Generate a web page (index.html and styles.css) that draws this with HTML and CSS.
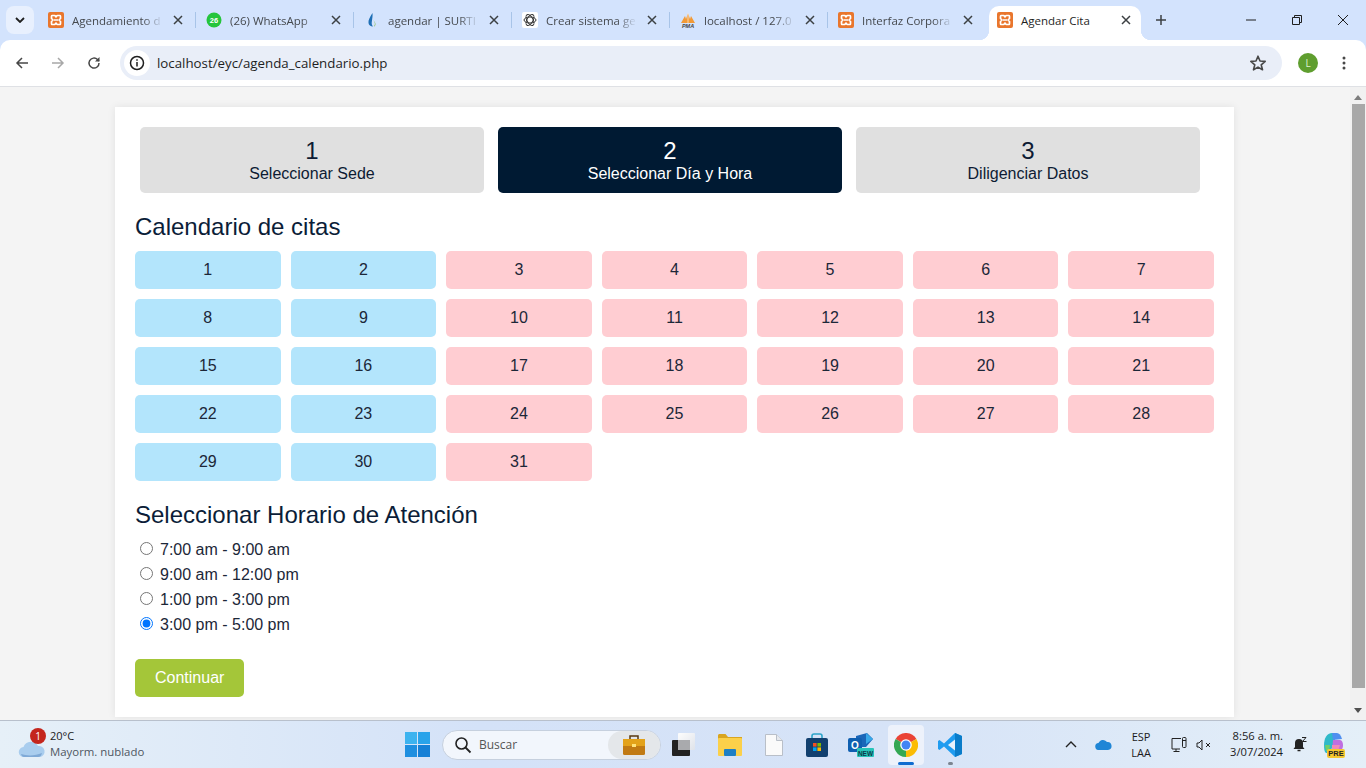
FILE: index.html
```html
<!DOCTYPE html>
<html lang="es">
<head>
    <meta charset="UTF-8">
    <title>Agendar Cita</title>
    <link rel="stylesheet" href="styles.css">
</head>
<body>
    <svg class="defs" width="0" height="0">
        <symbol id="xampp" viewBox="0 0 16 16">
            <rect width="16" height="16" rx="2" fill="#e9762d"/>
            <path d="M4 3.500h2.500c1 0 1 1.500 1.500 1.500s.5-1.500 1.500-1.500H12c.5 0 .5.5.5 1v2L11 8l1.500 1.500v2c0 .5 0 1-.5 1H9.500c-1 0-1-1.500-1.500-1.500s-.5 1.500-1.500 1.500H4c-.5 0-.5-.5-.5-1v-2L5 8 3.500 6.500v-2c0-.5 0-1 .5-1z" fill="none" stroke="#fff" stroke-width="1.700" stroke-linejoin="round"/>
            <path d="M6 8h4" stroke="#fff" stroke-width="1.500"/>
        </symbol>
        <symbol id="close" viewBox="0 0 10 10">
            <path d="M1 1l8 8M9 1l-8 8" stroke="#3c4043" stroke-width="1.500" fill="none"/>
        </symbol>
    </svg>

    <!-- barra de pestañas -->
    <div class="tabstrip">
        <div class="tab-menu">
            <svg width="10" height="6" viewBox="0 0 10 6"><path d="M1 1l4 4 4-4" stroke="#1f1f1f" stroke-width="1.800" fill="none"/></svg>
        </div>
        <div class="tab">
            <svg class="favicon" viewBox="0 0 16 16"><use href="#xampp"/></svg>
            <span class="tab-title">Agendamiento d</span>
            <svg class="tab-close" viewBox="0 0 10 10"><use href="#close"/></svg>
        </div>
        <div class="tab">
            <svg class="favicon" viewBox="0 0 16 16">
                <circle cx="8" cy="8" r="7.500" fill="#25c53c"/>
                <text x="8" y="10.500" text-anchor="middle" class="wa-count">26</text>
            </svg>
            <span class="tab-title">(26) WhatsApp</span>
            <svg class="tab-close" viewBox="0 0 10 10"><use href="#close"/></svg>
        </div>
        <div class="tab">
            <svg class="favicon" viewBox="0 0 16 16">
                <path d="M8.500 1C6 5 4 8 4.500 11c.3 2 2 3.500 4.500 3.500-1.500-1.500-1.500-3.500-1-6 .3-2 .8-5 .5-7.500z" fill="#1f6fb5"/>
                <path d="M8.800 8c2 1.500 3 4 1.200 6.500 2.200-.5 2-4.500-1.200-6.500z" fill="#7fb93c"/>
            </svg>
            <span class="tab-title">agendar | SURTI</span>
            <svg class="tab-close" viewBox="0 0 10 10"><use href="#close"/></svg>
        </div>
        <div class="tab">
            <svg class="favicon" viewBox="0 0 16 16">
                <rect width="16" height="16" rx="2" fill="#fff"/>
                <g fill="none" stroke="#333" stroke-width="1">
                    <ellipse cx="8" cy="8" rx="6" ry="3"/>
                    <ellipse cx="8" cy="8" rx="6" ry="3" transform="rotate(60 8 8)"/>
                    <ellipse cx="8" cy="8" rx="6" ry="3" transform="rotate(120 8 8)"/>
                </g>
            </svg>
            <span class="tab-title">Crear sistema ge</span>
            <svg class="tab-close" viewBox="0 0 10 10"><use href="#close"/></svg>
        </div>
        <div class="tab">
            <svg class="favicon" viewBox="0 0 16 16">
                <path d="M1 11L5 4l1 3 2-6 2 6 1-3 4 7z" fill="#f29a36"/>
                <path d="M8 1v10" stroke="#fff" stroke-width=".6"/>
                <text x="8" y="15.500" text-anchor="middle" class="pma">PMA</text>
            </svg>
            <span class="tab-title">localhost / 127.0</span>
            <svg class="tab-close" viewBox="0 0 10 10"><use href="#close"/></svg>
        </div>
        <div class="tab">
            <svg class="favicon" viewBox="0 0 16 16"><use href="#xampp"/></svg>
            <span class="tab-title">Interfaz Corpora</span>
            <svg class="tab-close" viewBox="0 0 10 10"><use href="#close"/></svg>
        </div>
        <div class="tab tab-active">
            <svg class="favicon" viewBox="0 0 16 16"><use href="#xampp"/></svg>
            <span class="tab-title">Agendar Cita</span>
            <svg class="tab-close" viewBox="0 0 10 10"><use href="#close"/></svg>
        </div>
        <svg class="tab-new" width="12" height="12" viewBox="0 0 12 12"><path d="M6 1v10M1 6h10" stroke="#3c4043" stroke-width="1.500"/></svg>
        <div class="win-controls">
            <svg width="10" height="10" viewBox="0 0 10 10"><path d="M0 5h10" stroke="#1f1f1f"/></svg>
            <svg width="10" height="10" viewBox="0 0 10 10"><path d="M.5 2.500h7v7h-7zM2.500 2.500V.5h7v7H7.500" fill="none" stroke="#1f1f1f"/></svg>
            <svg width="10" height="10" viewBox="0 0 10 10"><path d="M0 0l10 10M10 0L0 10" stroke="#1f1f1f"/></svg>
        </div>
    </div>

    <!-- barra de direccion -->
    <div class="toolbar">
        <svg class="nav-icon" viewBox="0 0 16 16"><path d="M14 8H3M8 3L3 8l5 5" fill="none" stroke="#474747" stroke-width="1.500"/></svg>
        <svg class="nav-icon" viewBox="0 0 16 16"><path d="M2 8h11M8 3l5 5-5 5" fill="none" stroke="#a8a8a8" stroke-width="1.500"/></svg>
        <svg class="nav-icon" viewBox="0 0 16 16"><path d="M13 8a5 5 0 1 1-1.500-3.500L13 6" fill="none" stroke="#474747" stroke-width="1.500"/><path d="M13.500 2v4.500H9z" fill="#474747"/></svg>
        <div class="omnibox">
            <span class="site-info">
                <svg width="16" height="16" viewBox="0 0 16 16"><circle cx="8" cy="8" r="6.500" fill="none" stroke="#1f1f1f" stroke-width="1.500"/><path d="M8 7v4.500M8 4.300v1.500" stroke="#1f1f1f" stroke-width="1.500"/></svg>
            </span>
            <span class="url">localhost/eyc/agenda_calendario.php</span>
            <svg class="star" width="18" height="18" viewBox="0 0 18 18"><path d="M9 2.200l2 4.800 5.200.4-4 3.400 1.300 5L9 13.100l-4.500 2.700 1.300-5-4-3.400L7 7z" fill="none" stroke="#474747" stroke-width="1.600" stroke-linejoin="round"/></svg>
        </div>
        <div class="avatar">L</div>
        <svg class="kebab" width="4" height="14" viewBox="0 0 4 14"><circle cx="2" cy="2" r="1.500"/><circle cx="2" cy="7" r="1.500"/><circle cx="2" cy="12" r="1.500"/></svg>
    </div>

    <div class="viewport">
        <div class="page">
            <div class="card">
                <div class="steps">
                    <div class="step"><span class="step-num">1</span><span>Seleccionar Sede</span></div>
                    <div class="step step-active"><span class="step-num">2</span><span>Seleccionar Día y Hora</span></div>
                    <div class="step"><span class="step-num">3</span><span>Diligenciar Datos</span></div>
                </div>

                <h2 class="title">Calendario de citas</h2>
                <div class="calendar">
                    <div class="day day-free">1</div>
                    <div class="day day-free">2</div>
                    <div class="day day-busy">3</div>
                    <div class="day day-busy">4</div>
                    <div class="day day-busy">5</div>
                    <div class="day day-busy">6</div>
                    <div class="day day-busy">7</div>
                    <div class="day day-free">8</div>
                    <div class="day day-free">9</div>
                    <div class="day day-busy">10</div>
                    <div class="day day-busy">11</div>
                    <div class="day day-busy">12</div>
                    <div class="day day-busy">13</div>
                    <div class="day day-busy">14</div>
                    <div class="day day-free">15</div>
                    <div class="day day-free">16</div>
                    <div class="day day-busy">17</div>
                    <div class="day day-busy">18</div>
                    <div class="day day-busy">19</div>
                    <div class="day day-busy">20</div>
                    <div class="day day-busy">21</div>
                    <div class="day day-free">22</div>
                    <div class="day day-free">23</div>
                    <div class="day day-busy">24</div>
                    <div class="day day-busy">25</div>
                    <div class="day day-busy">26</div>
                    <div class="day day-busy">27</div>
                    <div class="day day-busy">28</div>
                    <div class="day day-free">29</div>
                    <div class="day day-free">30</div>
                    <div class="day day-busy">31</div>
                </div>

                <h2 class="title title-hours">Seleccionar Horario de Atención</h2>
                <form class="hours">
                    <label><input type="radio" name="hora">7:00 am - 9:00 am</label>
                    <label><input type="radio" name="hora">9:00 am - 12:00 pm</label>
                    <label><input type="radio" name="hora">1:00 pm - 3:00 pm</label>
                    <label><input type="radio" name="hora" checked>3:00 pm - 5:00 pm</label>
                </form>
                <button class="btn-continue" type="button">Continuar</button>
            </div>
        </div>
        <div class="scrollbar">
            <svg width="8" height="5" viewBox="0 0 8 5"><path d="M4 0l4 5H0z" fill="#7c7c7c"/></svg>
            <div class="scroll-thumb"></div>
            <svg class="scroll-down" width="8" height="5" viewBox="0 0 8 5"><path d="M0 0h8L4 5z" fill="#505050"/></svg>
        </div>
    </div>

    <!-- barra de tareas -->
    <div class="taskbar">
        <div class="weather">
            <div class="weather-icon">
                <svg width="28" height="20" viewBox="0 0 28 20">
                    <path d="M6 18a5 5 0 0 1-.5-10A8 8 0 0 1 20 7a5.500 5.500 0 0 1 2 11z" fill="#a9cdee"/>
                    <path d="M3 15c6 2 14 2 21-1-1 3-2 4-4 4H6c-1.500 0-2.500-1-3-3z" fill="#7fa9d6"/>
                </svg>
                <span class="badge">1</span>
            </div>
            <div class="weather-text">
                <div class="temp">20°C</div>
                <div class="sky">Mayorm. nublado</div>
            </div>
        </div>

        <div class="task-center">
            <svg class="win-logo" width="25" height="25" viewBox="0 0 25 25">
                <rect width="12" height="12" fill="#3db3ef"/>
                <rect x="13" width="12" height="12" fill="#2aa3ea"/>
                <rect y="13" width="12" height="12" fill="#1f8fe0"/>
                <rect x="13" y="13" width="12" height="12" fill="#1780d6"/>
            </svg>
            <div class="search">
                <svg width="18" height="18" viewBox="0 0 18 18"><circle cx="7.500" cy="7.500" r="5.500" fill="none" stroke="#222" stroke-width="1.600"/><path d="M11.500 11.500l5 5" stroke="#222" stroke-width="1.800"/></svg>
                <span class="search-text">Buscar</span>
                <div class="search-pill">
                    <svg width="22" height="21" viewBox="0 0 22 21">
                        <path d="M7 5V2h8v3" fill="none" stroke="#5a3a10" stroke-width="1.500"/>
                        <rect y="5" width="22" height="16" rx="1.500" fill="#c17a13"/>
                        <rect y="5" width="22" height="7" fill="#e3a21a"/>
                        <rect x="9" y="10" width="4" height="3" fill="#ffe27a"/>
                    </svg>
                </div>
            </div>
            <div class="task-apps">
                <div class="app">
                    <svg width="23" height="23" viewBox="0 0 23 23">
                        <defs>
                            <linearGradient id="taskview" x1="0" y1="0" x2="1" y2="1">
                                <stop offset="0" stop-color="#fdfdfd"/>
                                <stop offset="1" stop-color="#dfe3ea"/>
                            </linearGradient>
                        </defs>
                        <rect y="7" width="18" height="16" rx="1" fill="#222"/>
                        <rect x="6" width="17" height="17" rx="1" fill="url(#taskview)"/>
                        <rect x="6" y="7" width="12" height="10" fill="#a9aaad"/>
                    </svg>
                </div>
                <div class="app app-shift">
                    <svg width="24" height="22" viewBox="0 0 24 22">
                        <path d="M0 1.500C0 .7.700 0 1.500 0h6L10 3h14v4H0z" fill="#d9a520"/>
                        <rect y="4" width="24" height="18" rx="1" fill="#fbd04a"/>
                        <rect x="6" y="15" width="12" height="7" rx="1" fill="#1e7fc4"/>
                    </svg>
                </div>
                <div class="app app-shift">
                    <svg width="18" height="22" viewBox="0 0 18 22">
                        <path d="M.5.500h11l6 6v15H.5z" fill="#fafafa" stroke="#b9bfc8"/>
                        <path d="M11.500.5v6h6" fill="#e6e9ee" stroke="#b9bfc8"/>
                    </svg>
                </div>
                <div class="app">
                    <svg width="22" height="24" viewBox="0 0 22 24">
                        <path d="M6 6V3c0-1.500 1-2 2-2h6c1 0 2 .5 2 2v3" fill="none" stroke="#2da4c9" stroke-width="1.600"/>
                        <rect y="5" width="22" height="19" rx="2" fill="#12406f"/>
                        <rect x="7" y="10" width="3.600" height="3.600" fill="#f25022"/>
                        <rect x="11.400" y="10" width="3.600" height="3.600" fill="#7fba00"/>
                        <rect x="7" y="14.400" width="3.600" height="3.600" fill="#00a4ef"/>
                        <rect x="11.400" y="14.400" width="3.600" height="3.600" fill="#ffb900"/>
                    </svg>
                </div>
                <div class="app">
                    <svg width="26" height="24" viewBox="0 0 26 24">
                        <path d="M8 3l11-3 6 6-7 8H8z" fill="#1a66b8"/>
                        <path d="M18 0l7 6-7 5z" fill="#38a8e8"/>
                        <rect y="5" width="14" height="14" rx="2" fill="#0f5fb0"/>
                        <text x="7" y="16" text-anchor="middle" class="outlook-o">O</text>
                        <rect x="9" y="15" width="17" height="9" rx="1" fill="#27c4b8"/>
                        <text x="17.500" y="22.500" text-anchor="middle" class="new-tag">NEW</text>
                    </svg>
                </div>
                <div class="app app-active">
                    <svg width="24" height="24" viewBox="0 0 24 24">
                        <path d="M12 12L22.400 6A12 12 0 0 0 1.600 6z" fill="#ea4335"/>
                        <path d="M12 12L1.600 6A12 12 0 0 0 12 24z" fill="#34a853"/>
                        <path d="M12 12L12 24A12 12 0 0 0 22.400 6z" fill="#fbbc05"/>
                        <circle cx="12" cy="12" r="5.800" fill="#fff"/>
                        <circle cx="12" cy="12" r="4.500" fill="#4285f4"/>
                    </svg>
                    <span class="app-running"></span>
                </div>
                <div class="app">
                    <svg width="24" height="24" viewBox="0 0 24 24">
                        <path d="M17 0l7 3v18l-7 3L6 13.500 1.500 17 0 16V8l1.500-1L6 10.500z" fill="#1f9cf0"/>
                        <path d="M17 6.500L10 12l7 5.500z" fill="#eaf2fb"/>
                        <path d="M17 0l7 3v18l-7 3z" fill="#0a7cc9"/>
                    </svg>
                    <span class="app-dot"></span>
                </div>
            </div>
        </div>

        <div class="tray">
            <svg width="12" height="7" viewBox="0 0 12 7"><path d="M1 6l5-5 5 5" fill="none" stroke="#222" stroke-width="1.400"/></svg>
            <svg class="tray-cloud" width="17" height="11" viewBox="0 0 17 11"><path d="M4 11a3.500 3.500 0 0 1-.5-7A5 5 0 0 1 12 3a4 4 0 0 1 1 8z" fill="#1f86d6"/></svg>
            <div class="lang">ESP<br>LAA</div>
            <svg class="tray-net" width="16" height="16" viewBox="0 0 16 16"><path d="M9 12H1V1.500h9M5 12v2.500M2.500 14.500h6" fill="none" stroke="#222"/><rect x="11.500" y=".5" width="3.500" height="10" rx="1" fill="none" stroke="#222"/><path d="M11.500 3.500h3.500" stroke="#222"/></svg>
            <svg class="tray-sound" width="16" height="12" viewBox="0 0 16 12"><path d="M1 4h2l3-3v10L3 8H1z" fill="none" stroke="#222"/><path d="M10 4l4 4M14 4l-4 4" stroke="#222"/></svg>
            <div class="clock">8:56 a. m.<br>3/07/2024</div>
            <svg class="tray-bell" width="14" height="15" viewBox="0 0 14 15"><path d="M6 2a4 4 0 0 0-4 4v4L.5 12h11L10 10V6a4 4 0 0 0-4-4z" fill="#222"/><path d="M4.500 13.500h3" stroke="#222" stroke-width="1.500"/><path d="M9 .5h4L9.500 4.500h4" fill="none" stroke="#222"/></svg>
            <div class="copilot">
                <svg width="23" height="22" viewBox="0 0 23 22">
                    <path d="M3 12C3 5 6 0 11 0h5l-4 12-3 8H5c-1.500-1-2-4-2-8z" fill="#2fb9c9"/>
                    <path d="M11 0h5c2 0 4 2 5 6l-9 1z" fill="#4f8ff0"/>
                    <path d="M12 7h7c2 0 3 3 3 5 0 4-2 6-5 6h-6z" fill="#c06fe0"/>
                    <path d="M4 12l5 0-1 6H5z" fill="#6fcf6a"/>
                    <path d="M11 12h8l-2 6h-6z" fill="#f08ab8"/>
                </svg>
                <span class="pre-tag">PRE</span>
            </div>
        </div>
    </div>
</body>
</html>
```
FILE: styles.css
```css
* {
    box-sizing: border-box;
}

html, body {
    margin: 0;
    padding: 0;
    height: 100%;
    overflow: hidden;
}

body {
    width: 1366px;
    height: 768px;
    display: flex;
    flex-direction: column;
    font-family: "Liberation Sans", Arial, sans-serif;
    color: #0d1b33;
    background-color: #d3e3fd;
}

.defs {
    position: absolute;
}

/* Pestañas */
.tabstrip {
    height: 40px;
    flex: none;
    display: flex;
    align-items: flex-start;
    position: relative;
    z-index: 1;
    font-family: "Open Sans", "Noto Sans", sans-serif;
    font-size: 11.5px;
    color: #45494e;
}

.tab-menu {
    width: 28px;
    height: 28px;
    margin: 6px 4px 0 6px;
    display: flex;
    align-items: center;
    justify-content: center;
    background-color: #e8f0fe;
    border-radius: 8px;
}

.tab {
    width: 158px;
    height: 34px;
    margin-top: 6px;
    padding: 0 13px 6px 10px;
    display: flex;
    align-items: center;
    position: relative;
}

.tab::after {
    content: "";
    position: absolute;
    right: 0;
    top: 6px;
    width: 1px;
    height: 16px;
    background-color: #a8c4e8;
}

.tab:nth-child(7)::after {
    display: none;
}

.tab-active {
    width: 152px;
    margin-left: 3px;
    padding-left: 8px;
    padding-right: 10px;
    background-color: #fff;
    border-radius: 10px 10px 0 0;
    color: #1f1f1f;
}

/* esquinas concavas de la pestaña activa */
.tab-active::before,
.tab-active::after {
    content: "";
    position: absolute;
    top: auto;
    bottom: 0;
    width: 10px;
    height: 10px;
}

.tab-active::before {
    left: -10px;
    background: radial-gradient(circle at 0 0, transparent 10px, #fff 10.5px);
}

.tab-active::after {
    right: -10px;
    background: radial-gradient(circle at 100% 0, transparent 10px, #fff 10.5px);
}

.favicon {
    width: 16px;
    height: 16px;
    flex: none;
}

.tab-title {
    flex: 1;
    margin-left: 8px;
    white-space: nowrap;
    -webkit-mask-image: linear-gradient(to right, #000 78%, transparent 100%);
    mask-image: linear-gradient(to right, #000 78%, transparent 100%);
}

.tab-active .tab-title {
    -webkit-mask-image: none;
    mask-image: none;
}

.tab-close {
    width: 10px;
    height: 10px;
    flex: none;
    margin-left: 10px;
}

.tab-new {
    margin: 14px 0 0 14px;
}

.win-controls {
    margin-left: auto;
    width: 143px;
    height: 40px;
    padding: 15px 18px 0 23px;
    display: flex;
    justify-content: space-between;
    align-items: flex-start;
}

.wa-count {
    font-family: "Liberation Sans", sans-serif;
    font-size: 7.500px;
    font-weight: bold;
    fill: #fff;
}

.pma {
    font-family: "Liberation Sans", sans-serif;
    font-size: 5.500px;
    font-weight: bold;
    font-style: italic;
    fill: #444;
}

/* Barra de direccion */
.toolbar {
    height: 47px;
    flex: none;
    display: flex;
    align-items: center;
    padding: 0 0 1px 14px;
    background-color: #fff;
    border-bottom: 1px solid #dfe1e5;
    border-radius: 10px 10px 0 0;
}

.nav-icon {
    width: 16px;
    height: 16px;
    margin-right: 20px;
}

.omnibox {
    width: 1162px;
    height: 34px;
    margin-left: -2px;
    display: flex;
    align-items: center;
    padding: 0 15px 0 4px;
    background-color: #e9eef8;
    border-radius: 17px;
}

.site-info {
    width: 26px;
    height: 26px;
    display: flex;
    align-items: center;
    justify-content: center;
    background-color: #fff;
    border-radius: 50%;
}

.url {
    margin-left: 7px;
    font-family: "Open Sans", "Noto Sans", sans-serif;
    font-size: 13.300px;
    color: #1f1f1f;
}

.star {
    margin-left: auto;
}

.avatar {
    width: 20px;
    height: 20px;
    margin-left: 16px;
    display: flex;
    align-items: center;
    justify-content: center;
    background-color: #5f9e2f;
    border-radius: 50%;
    font-family: "Open Sans", sans-serif;
    font-size: 10px;
    color: #dff0d0;
}

.kebab {
    margin-left: 24px;
    fill: #474747;
}

/* Contenido */
.viewport {
    flex: 1;
    min-height: 0;
    display: flex;
}

.page {
    flex: 1;
    padding: 20px 0 0 115px;
    overflow: hidden;
    background-color: #f4f4f4;
}

.card {
    width: 1119px;
    padding: 20px;
    background-color: #fff;
    box-shadow: 0 0 8px rgba(0, 0, 0, 0.08);
}

.steps {
    display: flex;
    gap: 14px;
    padding: 0 14px 0 5px;
}

.step {
    flex: 1;
    height: 66px;
    padding-top: 10px;
    display: flex;
    flex-direction: column;
    align-items: center;
    background-color: #e0e0e0;
    border-radius: 5px;
    font-size: 16px;
    line-height: 18px;
}

.step-num {
    font-size: 24px;
    line-height: 28px;
}

.step-active {
    background-color: #001a33;
    color: #fff;
}

.title {
    margin: 20px 0 10px;
    font-size: 24px;
    font-weight: normal;
    line-height: 28px;
    color: #0b1d38;
}

.calendar {
    display: grid;
    grid-template-columns: repeat(7, 1fr);
    gap: 10px;
}

.day {
    height: 38px;
    display: flex;
    align-items: center;
    justify-content: center;
    border-radius: 5px;
    font-size: 16px;
    color: #1c2738;
}

.day-free {
    background-color: #b3e5fc;
}

.day-busy {
    background-color: #ffcdd2;
}

.title-hours {
    margin-bottom: 8px;
}

.hours {
    margin-bottom: 22px;
}

.hours label {
    height: 25px;
    display: flex;
    align-items: center;
    font-size: 16px;
    color: #1c2738;
}

.hours input {
    margin: 0 7px 2px 5px;
}

.btn-continue {
    display: block;
    height: 38px;
    padding: 0 20px;
    background-color: #a4c639;
    color: #fff;
    border: none;
    border-radius: 5px;
    font-family: inherit;
    font-size: 16px;
}

.scrollbar {
    width: 16px;
    flex: none;
    display: flex;
    flex-direction: column;
    align-items: center;
    padding: 8px 0 7px;
    background-color: #f1f1f1;
}

.scroll-thumb {
    width: 13px;
    height: 584px;
    margin-top: 4px;
    background-color: #a8a8a8;
}

.scroll-down {
    margin-top: auto;
}

/* Barra de tareas */
.taskbar {
    height: 48px;
    flex: none;
    display: flex;
    align-items: center;
    border-top: 1px solid #b8c0cc;
    background: linear-gradient(to right, #e6f0f8 0%, #d4e2f8 35%, #d6e3f7 65%, #e4eff8 100%);
    font-family: "Open Sans", "Noto Sans", sans-serif;
    font-size: 11px;
    color: #1b1b1b;
}

.weather {
    width: 405px;
    flex: none;
    padding-left: 18px;
    display: flex;
    align-items: center;
}

.weather-icon {
    position: relative;
    width: 32px;
    height: 28px;
    display: flex;
    align-items: flex-end;
}

.weather-text {
    margin-bottom: 2px;
}

.badge {
    position: absolute;
    left: 12px;
    top: -3px;
    width: 16px;
    height: 16px;
    border-radius: 50%;
    background-color: #c4261d;
    color: #fff;
    font-size: 10px;
    line-height: 16px;
    text-align: center;
}

.temp {
    line-height: 16px;
}

.sky {
    font-size: 11.400px;
    line-height: 16px;
    color: #4e5661;
}

.task-center {
    display: flex;
    align-items: center;
}

.search {
    width: 219px;
    height: 30px;
    margin-left: 12px;
    padding-left: 11px;
    display: flex;
    align-items: center;
    background-color: #f2f6fc;
    border: 1px solid #c6d0de;
    border-radius: 15px;
}

.search-text {
    margin-left: 7px;
    font-size: 12px;
    color: #555;
}

.search-pill {
    margin-left: auto;
    width: 52px;
    height: 28px;
    display: flex;
    align-items: center;
    justify-content: center;
    background-color: #e4e7ea;
    border-radius: 14px;
}

.task-apps {
    display: flex;
    align-items: center;
}

.app {
    width: 44.500px;
    height: 40px;
    display: flex;
    align-items: center;
    justify-content: center;
    position: relative;
}

.app-shift {
    padding-left: 4px;
}

.app-active {
    width: 36.500px;
    margin: 0 4px;
    background-color: #edf2fb;
    border-radius: 4px;
}

.app-running {
    position: absolute;
    left: 10px;
    bottom: 0;
    width: 16px;
    height: 3px;
    border-radius: 2px;
    background-color: #0f6cd0;
}

.app-dot {
    position: absolute;
    left: 20px;
    bottom: 0;
    width: 5px;
    height: 3px;
    border-radius: 2px;
    background-color: #7c8591;
}

.outlook-o {
    font-family: "Liberation Sans", sans-serif;
    font-size: 10px;
    font-weight: bold;
    fill: #fff;
}

.new-tag {
    font-family: "Liberation Sans", sans-serif;
    font-size: 6.500px;
    font-weight: bold;
    fill: #0b3a4a;
}

.tray {
    margin-left: auto;
    display: flex;
    align-items: center;
    padding-right: 22px;
}

.tray-cloud {
    margin-left: 18px;
}

.lang {
    width: 24px;
    margin-left: 17px;
    line-height: 16px;
    text-align: center;
}

.tray-net {
    margin-left: 18px;
}

.tray-sound {
    margin-left: 9px;
}

.clock {
    margin: 0 0 2px 18px;
    font-size: 11.200px;
    line-height: 16px;
    text-align: right;
}

.tray-bell {
    margin-left: 10px;
}

.copilot {
    position: relative;
    width: 23px;
    height: 24px;
    margin-left: 14px;
}

.pre-tag {
    position: absolute;
    right: -1px;
    bottom: -1px;
    width: 18px;
    height: 9px;
    border-radius: 2px;
    background-color: #f6c72f;
    font-family: "Liberation Sans", sans-serif;
    font-size: 7.500px;
    font-weight: bold;
    line-height: 9px;
    text-align: center;
    color: #222;
}
```
